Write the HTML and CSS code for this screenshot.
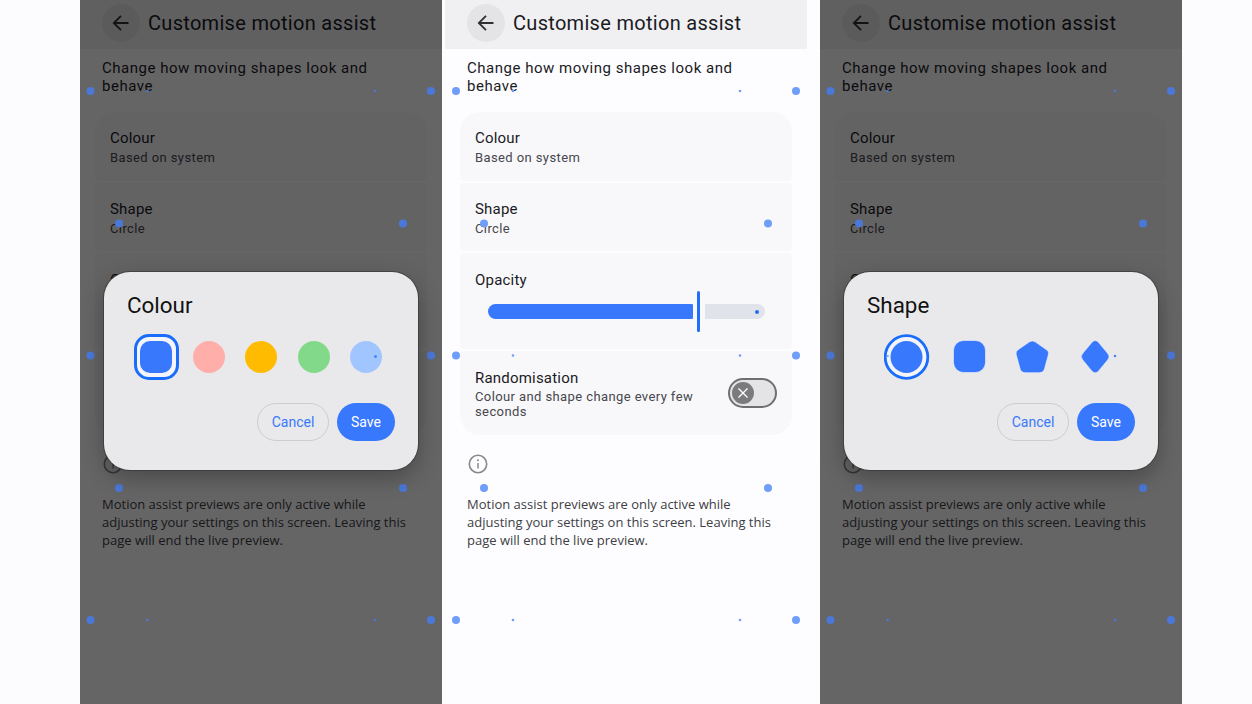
FILE: index.html
```html
<!DOCTYPE html>
<html lang="en">
<head>
<meta charset="utf-8">
<title>Customise motion assist</title>
<link rel="stylesheet" href="styles.css">
</head>
<body>
<div class="stage">

<section class="phone phone-left">
  <header class="bar">
    <span class="back"><svg width="20" height="20" viewBox="0 0 20 20"><path d="M17.5 10H3.2M10 2.8 2.8 10l7.2 7.2" fill="none" stroke="currentColor" stroke-width="1.8"/></svg></span>
    <h1 class="bar-title">Customise motion assist</h1>
  </header>
  <p class="intro">Change how moving shapes look and behave</p>
  <div class="cards">
    <div class="card card-first"><div class="card-title">Colour</div><div class="card-sub">Based on system</div></div>
    <div class="card card-shape"><div class="card-title">Shape</div><div class="card-sub">Circle</div></div>
    <div class="card card-opacity"><div class="card-title">Opacity</div>
      <div class="slider"><span class="fill"></span><span class="handle"></span><span class="rest"><i class="stop"></i></span></div>
    </div>
    <div class="card card-last">
      <div class="rand-text"><div class="card-title">Randomisation</div><div class="card-sub">Colour and shape change every few seconds</div></div>
      <span class="toggle"><span class="thumb"><svg width="12" height="12" viewBox="0 0 12 12"><path d="M1.5 1.5l9 9M10.5 1.5l-9 9" stroke="#fff" stroke-width="1.3" fill="none"/></svg></span></span>
    </div>
  </div>
  <svg class="info" width="20" height="20" viewBox="0 0 20 20"><circle cx="10" cy="10" r="8.7" fill="none" stroke="currentColor" stroke-width="1.6"/><path d="M10 9v5.5" stroke="currentColor" stroke-width="1.5"/><circle cx="10" cy="6.3" r="1" fill="currentColor"/></svg>
  <p class="note">Motion assist previews are only active while adjusting your settings on this screen. Leaving this page will end the live preview.</p>
  <div class="scrim"></div>
  <svg class="dots" width="362" height="704" viewBox="0 0 362 704"><g fill="#4a78d8"><circle cx="10.5" cy="91" r="4"/><circle cx="351" cy="91" r="4"/><circle cx="39" cy="223.500" r="4"/><circle cx="323" cy="223.500" r="4"/><circle cx="10.500" cy="355.500" r="4"/><circle cx="351" cy="355.500" r="4"/><circle cx="39" cy="488" r="4"/><circle cx="323" cy="488" r="4"/><circle cx="10.500" cy="620" r="4"/><circle cx="351" cy="620" r="4"/><circle cx="67.500" cy="91" r="1.300"/><circle cx="295" cy="91" r="1.300"/><circle cx="67.500" cy="620" r="1.300"/><circle cx="295" cy="620" r="1.300"/></g></svg>
  <div class="dialog">
    <h2 class="dialog-title">Colour</h2>
    <div class="swatches">
      <span class="swatch-selected"><span class="swatch-square"></span></span>
      <span class="swatch swatch-pink"></span>
      <span class="swatch swatch-amber"></span>
      <span class="swatch swatch-green"></span>
      <span class="swatch swatch-sky"><i class="mini"></i></span>
    </div>
    <div class="actions"><span class="btn btn-cancel">Cancel</span><span class="btn btn-save">Save</span></div>
  </div>
</section>

<section class="middle">
<div class="phone">
  <header class="bar">
    <span class="back"><svg width="20" height="20" viewBox="0 0 20 20"><path d="M17.5 10H3.2M10 2.8 2.8 10l7.2 7.2" fill="none" stroke="currentColor" stroke-width="1.8"/></svg></span>
    <h1 class="bar-title">Customise motion assist</h1>
  </header>
  <p class="intro">Change how moving shapes look and behave</p>
  <div class="cards">
    <div class="card card-first"><div class="card-title">Colour</div><div class="card-sub">Based on system</div></div>
    <div class="card card-shape"><div class="card-title">Shape</div><div class="card-sub">Circle</div></div>
    <div class="card card-opacity"><div class="card-title">Opacity</div>
      <div class="slider"><span class="fill"></span><span class="handle"></span><span class="rest"><i class="stop"></i></span></div>
    </div>
    <div class="card card-last">
      <div class="rand-text"><div class="card-title">Randomisation</div><div class="card-sub">Colour and shape change every few seconds</div></div>
      <span class="toggle"><span class="thumb"><svg width="12" height="12" viewBox="0 0 12 12"><path d="M1.5 1.5l9 9M10.5 1.5l-9 9" stroke="#fff" stroke-width="1.3" fill="none"/></svg></span></span>
    </div>
  </div>
  <svg class="info" width="20" height="20" viewBox="0 0 20 20"><circle cx="10" cy="10" r="8.7" fill="none" stroke="currentColor" stroke-width="1.6"/><path d="M10 9v5.5" stroke="currentColor" stroke-width="1.5"/><circle cx="10" cy="6.3" r="1" fill="currentColor"/></svg>
  <p class="note">Motion assist previews are only active while adjusting your settings on this screen. Leaving this page will end the live preview.</p>
  <svg class="dots" width="362" height="704" viewBox="0 0 362 704"><g fill="#6e9ef8"><circle cx="11" cy="91" r="4"/><circle cx="351" cy="91" r="4"/><circle cx="39" cy="223.500" r="4"/><circle cx="323" cy="223.500" r="4"/><circle cx="11" cy="355.500" r="4"/><circle cx="351" cy="355.500" r="4"/><circle cx="39" cy="488" r="4"/><circle cx="323" cy="488" r="4"/><circle cx="11" cy="620" r="4"/><circle cx="351" cy="620" r="4"/><circle cx="68" cy="91" r="1.300"/><circle cx="295" cy="91" r="1.300"/><circle cx="68" cy="355.500" r="1.300"/><circle cx="295" cy="355.500" r="1.300"/><circle cx="68" cy="620" r="1.300"/><circle cx="295" cy="620" r="1.300"/></g></svg>
</div>
</section>

<section class="phone phone-right">
  <header class="bar">
    <span class="back"><svg width="20" height="20" viewBox="0 0 20 20"><path d="M17.5 10H3.2M10 2.8 2.8 10l7.2 7.2" fill="none" stroke="currentColor" stroke-width="1.8"/></svg></span>
    <h1 class="bar-title">Customise motion assist</h1>
  </header>
  <p class="intro">Change how moving shapes look and behave</p>
  <div class="cards">
    <div class="card card-first"><div class="card-title">Colour</div><div class="card-sub">Based on system</div></div>
    <div class="card card-shape"><div class="card-title">Shape</div><div class="card-sub">Circle</div></div>
    <div class="card card-opacity"><div class="card-title">Opacity</div>
      <div class="slider"><span class="fill"></span><span class="handle"></span><span class="rest"><i class="stop"></i></span></div>
    </div>
    <div class="card card-last">
      <div class="rand-text"><div class="card-title">Randomisation</div><div class="card-sub">Colour and shape change every few seconds</div></div>
      <span class="toggle"><span class="thumb"><svg width="12" height="12" viewBox="0 0 12 12"><path d="M1.5 1.5l9 9M10.5 1.5l-9 9" stroke="#fff" stroke-width="1.3" fill="none"/></svg></span></span>
    </div>
  </div>
  <svg class="info" width="20" height="20" viewBox="0 0 20 20"><circle cx="10" cy="10" r="8.7" fill="none" stroke="currentColor" stroke-width="1.6"/><path d="M10 9v5.5" stroke="currentColor" stroke-width="1.5"/><circle cx="10" cy="6.3" r="1" fill="currentColor"/></svg>
  <p class="note">Motion assist previews are only active while adjusting your settings on this screen. Leaving this page will end the live preview.</p>
  <div class="scrim"></div>
  <svg class="dots" width="362" height="704" viewBox="0 0 362 704"><g fill="#4a78d8"><circle cx="10.500" cy="91" r="4"/><circle cx="351" cy="91" r="4"/><circle cx="39" cy="223.500" r="4"/><circle cx="323" cy="223.500" r="4"/><circle cx="10.500" cy="355.500" r="4"/><circle cx="351" cy="355.500" r="4"/><circle cx="39" cy="488" r="4"/><circle cx="323" cy="488" r="4"/><circle cx="10.500" cy="620" r="4"/><circle cx="351" cy="620" r="4"/><circle cx="67.500" cy="91" r="1.300"/><circle cx="295" cy="91" r="1.300"/><circle cx="67.500" cy="620" r="1.300"/><circle cx="295" cy="620" r="1.300"/></g></svg>
  <div class="dialog">
    <h2 class="dialog-title">Shape</h2>
    <svg class="shapes" width="268" height="46" viewBox="0 0 268 46">
      <circle cx="22.500" cy="23" r="21.300" fill="#f4f5fa" stroke="#1a6dfb" stroke-width="2.800"/>
      <circle cx="22.500" cy="23" r="16" fill="#3878fd"/>
      <circle cx="3.800" cy="22" r="1.100" fill="#6e9ef8"/>
      <rect x="69.500" y="6.500" width="32" height="32" rx="10" fill="#3878fd" stroke="#f4f5fa" stroke-width=".6"/>
      <path d="M145.500 7.800Q148.300 6 151.100 7.800L162.600 15.800Q165.200 17.600 164.400 20.600L160.600 34.600Q159.500 38.700 155.500 38.700L141.100 38.700Q137.100 38.700 136 34.600L132.200 20.600Q131.400 17.600 134 15.800Z" fill="#3878fd" stroke="#f4f5fa" stroke-width=".6"/>
      <path d="M208 8.200Q211.200 4.900 214.400 8.200L223.800 19.600Q226.400 22.700 223.800 25.800L214.400 37.200Q211.200 40.500 208 37.200L198.600 25.800Q196 22.700 198.600 19.600Z" fill="#3878fd" stroke="#f4f5fa" stroke-width=".6"/>
      <circle cx="231" cy="22" r="1.300" fill="#4a84f5"/>
    </svg>
    <div class="actions"><span class="btn btn-cancel">Cancel</span><span class="btn btn-save">Save</span></div>
  </div>
</section>

</div>
</body>
</html>
```
FILE: styles.css
```css
* { box-sizing: border-box; }
html, body { margin: 0; padding: 0; }
body {
  background: #fcfcff;
  font-family: Roboto, "Liberation Sans", sans-serif;
  color: #1b1b1f;
  overflow: hidden;
}
.stage {
  display: flex;
  width: 1252px;
  height: 704px;
  padding-left: 80px;
}
.phone {
  position: relative;
  width: 362px;
  height: 704px;
  flex: none;
  background: #fdfdff;
  overflow: hidden;
}
.middle {
  width: 378px;
  flex: none;
  padding-left: 3px;
  background: #fdfdff;
}
.bar {
  height: 49px;
  background: #f0f0f2;
  display: flex;
  align-items: center;
  gap: 8px;
  padding: 0 0 3px 22px;
}
.back {
  width: 38px;
  height: 38px;
  border-radius: 50%;
  background: #e4e4e6;
  color: #303034;
  display: flex;
  align-items: center;
  justify-content: center;
}
.bar-title {
  margin: 0;
  font-size: 20px;
  font-weight: 400;
  letter-spacing: .3px;
  white-space: nowrap;
}
.intro {
  margin: 10px 0 0;
  padding: 0 40px 0 22px;
  font-size: 15px;
  line-height: 18px;
  letter-spacing: .52px;
}
.cards {
  margin: 17px 15px 0;
  display: flex;
  flex-direction: column;
  gap: 2px;
}
.card {
  background: #f8f8fa;
  padding: 17px 15px 0;
  border-radius: 4px;
}
.card-first { height: 69px; border-radius: 20px 20px 4px 4px; }
.card-shape { height: 68px; }
.card-opacity { height: 96px; padding-top: 18px; }
.card-last {
  height: 84px;
  border-radius: 4px 4px 20px 20px;
  display: flex;
  justify-content: space-between;
  padding-top: 18px;
}
.card-title {
  font-size: 15px;
  line-height: 18px;
  letter-spacing: .2px;
}
.card-sub {
  font-size: 13px;
  line-height: 15px;
  letter-spacing: .4px;
  color: #47474d;
  margin-top: 2px;
}
.card-first .card-sub,
.card-shape .card-sub { margin-top: 2.500px; }
.rand-text { width: 230px; }
.slider {
  display: flex;
  align-items: center;
  height: 41px;
  margin: 2px 0 0 13px;
}
.fill {
  width: 205px;
  height: 15px;
  background: #3878fd;
  border-radius: 8px 1px 1px 8px;
}
.handle {
  width: 3px;
  height: 41px;
  background: #1f6ff6;
  border-radius: 2px;
  margin: 0 4.500px 0 4px;
}
.rest {
  width: 60px;
  height: 15px;
  background: #e1e3ea;
  border-radius: 1px 8px 8px 1px;
  display: flex;
  align-items: center;
  justify-content: flex-end;
  padding-right: 5.500px;
}
.stop {
  width: 4px;
  height: 4px;
  border-radius: 50%;
  background: #1f6ff6;
}
.toggle {
  width: 49px;
  height: 30px;
  margin: 9px 0 0 0;
  border: 2px solid #6f6f73;
  border-radius: 15px;
  background: #e4e4e6;
  display: flex;
  align-items: center;
  padding-left: 2px;
  flex: none;
}
.thumb {
  width: 22px;
  height: 22px;
  border-radius: 50%;
  background: #7b7b7d;
  display: flex;
  align-items: center;
  justify-content: center;
}
.info {
  display: block;
  margin: 19px 0 0 23px;
  color: #88888c;
}
.note {
  margin: 20.500px 0 0;
  padding: 0 30px 0 22px;
  font-family: "Open Sans", Roboto, sans-serif;
  font-size: 13px;
  line-height: 18px;
  color: #3e3e44;
}
.dots {
  position: absolute;
  left: 0;
  top: 0;
  pointer-events: none;
}
.scrim {
  position: absolute;
  inset: 0;
  background: rgba(0, 0, 0, .6);
}
.dialog {
  position: absolute;
  left: 24px;
  top: 272px;
  width: 314px;
  height: 198px;
  background: #e9e9eb;
  border-radius: 26px;
  box-shadow: 0 0 0 1px rgba(50, 50, 50, .6), 0 8px 22px rgba(0, 0, 0, .28);
  padding: 20px 23px 0;
}
.dialog-title {
  margin: 0;
  font-size: 22.400px;
  line-height: 26px;
  font-weight: 400;
  color: #111;
}
.swatches {
  display: flex;
  align-items: center;
  height: 46px;
  margin: 16px 0 0 7px;
}
.swatch-selected {
  width: 44.500px;
  height: 46px;
  flex: none;
  border: 3px solid #1a6dfb;
  border-radius: 15px;
  background: #f4f5fa;
  display: flex;
  align-items: center;
  justify-content: center;
  margin-right: 14px;
}
.swatch-square {
  width: 32px;
  height: 32px;
  background: #3878fd;
  border-radius: 10px;
}
.swatch {
  width: 32px;
  height: 32px;
  flex: none;
  border-radius: 50%;
  margin-right: 20.500px;
  position: relative;
}
.swatch-pink { background: #ffaeaa; }
.swatch-amber { background: #ffbb00; }
.swatch-green { background: #82d98a; }
.swatch-sky { background: #a1c5ff; }
.mini {
  position: absolute;
  left: 23.500px;
  top: 14px;
  width: 3px;
  height: 3px;
  border-radius: 50%;
  background: #4a84f5;
}
.shapes {
  display: block;
  margin: 16px 0 0 17px;
}
.actions {
  display: flex;
  justify-content: flex-end;
  gap: 8px;
  margin-top: 23px;
}
.btn {
  height: 38px;
  border-radius: 19px;
  font-size: 14px;
  display: flex;
  align-items: center;
  justify-content: center;
}
.btn-cancel {
  width: 72px;
  border: 1.500px solid #cdcdd0;
  color: #3878fd;
}
.btn-save {
  width: 58px;
  background: #3878fd;
  color: #fff;
}
```
